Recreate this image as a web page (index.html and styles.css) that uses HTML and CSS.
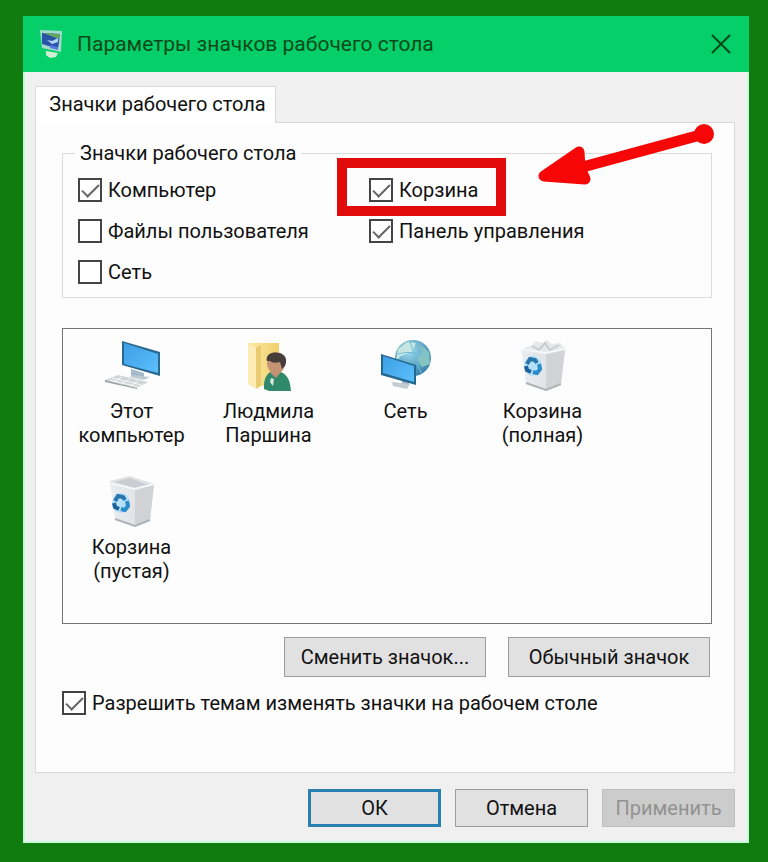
FILE: index.html
```html
<!DOCTYPE html>
<html lang="ru">

<head>
  <meta charset="utf-8">
  <meta name="viewport" content="width=device-width, initial-scale=1">
  <title>Параметры значков рабочего стола</title>
  <link rel="stylesheet" href="styles.css">
</head>

<body>
  <!-- shared icon parts -->
  <svg class="defs" width="0" height="0" aria-hidden="true">
    <defs>
      <linearGradient id="screen" x1="0" y1="0" x2="1" y2="1">
        <stop offset="0" stop-color="#3d9ee6"></stop>
        <stop offset="1" stop-color="#5cc0fa"></stop>
      </linearGradient>
      <linearGradient id="folder" x1="0" y1="0" x2="1" y2="0">
        <stop offset="0" stop-color="#fbe9a4"></stop>
        <stop offset="1" stop-color="#f2d06c"></stop>
      </linearGradient>
      <radialGradient id="globe" cx="0.4" cy="0.3" r="0.8">
        <stop offset="0" stop-color="#9fdcf2"></stop>
        <stop offset="1" stop-color="#2a789f"></stop>
      </radialGradient>
      <linearGradient id="bin" x1="0" y1="0" x2="1" y2="0">
        <stop offset="0" stop-color="#e9edf2"></stop>
        <stop offset="1" stop-color="#dbdcdf"></stop>
      </linearGradient>
      <symbol id="recycle" viewBox="0 0 18 20">
        <ellipse cx="9" cy="10" rx="9" ry="10" fill="#b5e0f8"></ellipse>
        <g fill="none" stroke-width="4">
          <path d="M3 8l3-5 5 1 2 3" stroke="#2875ab"></path>
          <path d="M15 8l1 5-3 4-4-1" stroke="#2a8cc9"></path>
          <path d="M7 16l-4-2-1-4" stroke="#1e639c"></path>
        </g>
      </symbol>
    </defs>
  </svg>

  <main class="window">
    <header class="titlebar">
      <svg class="app-icon" viewBox="0 0 26 30" aria-hidden="true">
        <path d="M2 1l22 1-1 21-19-4z" fill="#a5d9cf"></path>
        <path d="M4 4l18 1-2 15-16-5z" fill="#2854a8"></path>
        <path d="M5 4l17 1-1 5-8-3z" fill="#62a85e"></path>
        <path d="M9 11l5 1 6-3v4l-6 2z" fill="#b4d5f2"></path>
        <path d="M12 16l8 2v3l-8-2z" fill="#5379df"></path>
        <path d="M8 22l12 2-2 4-6 1-4-3z" fill="#d4efd5"></path>
      </svg>
      <h1>Параметры значков рабочего стола</h1>
      <button class="close" type="button" aria-label="Закрыть">
        <svg viewBox="0 0 20 20" aria-hidden="true">
          <path d="M1 1l18 18M19 1l-18 18" fill="none" stroke="#064a19" stroke-width="2"></path>
        </svg>
      </button>
    </header>

    <form class="content">
      <div class="tabs">
        <button class="tab" type="button">Значки рабочего стола</button>
      </div>

      <section class="panel">
        <fieldset>
          <legend>Значки рабочего стола</legend>
          <div class="options">
            <label class="check"><input type="checkbox" checked>Компьютер</label>
            <label class="check marked"><input type="checkbox" checked>Корзина</label>
            <label class="check"><input type="checkbox">Файлы пользователя</label>
            <label class="check"><input type="checkbox" checked>Панель управления</label>
            <label class="check"><input type="checkbox">Сеть</label>
          </div>
          <svg class="arrow" viewBox="0 0 180 64" aria-hidden="true">
            <g fill="#f60606" stroke="#f60606" stroke-linejoin="round">
              <path d="M167 12L42 46" stroke-width="11"></path>
              <circle cx="167" cy="12" r="10" stroke="none"></circle>
              <path d="M7 54L42 30 43 46 48 57z" stroke-width="11"></path>
            </g>
          </svg>
        </fieldset>

        <ul class="icons">
          <li>
            <svg viewBox="0 0 56 52" aria-hidden="true">
              <path d="M27 30l13 4v6l-13-3z" fill="#a5b9c8"></path>
              <path d="M28 36l18 2-6 3-14-3z" fill="#bccbd4"></path>
              <path d="M18 2l38 11v24L18 26z" fill="#296991"></path>
              <path d="M20 4l34 11v19L20 25z" fill="url(#screen)"></path>
              <path d="M14 36l30 7-11 6L1 41z" fill="#cfd5d8"></path>
              <path d="M1 41l32 8v1L1 43z" fill="#98a2a7"></path>
              <path d="M8 39l30 7M5 41l30 7M18 38l-9 5M26 40l-9 5M34 42l-8 5" fill="none" stroke="#f5f7f7"></path>
            </svg>
            <span>Этот компьютер</span>
          </li>
          <li>
            <svg viewBox="0 0 56 52" aria-hidden="true">
              <path d="M7 4h31v43H16L7 45z" fill="url(#folder)"></path>
              <path d="M7 4l8 5v41l-8-5z" fill="#fcebb2"></path>
              <path d="M15 9l5-3v41l-5 3z" fill="#eacb72"></path>
              <path d="M23 45c1-9 5-13 12-13 9 1 14 6 15 20-10 3-21 1-27-2z" fill="#31896b"></path>
              <path d="M30 35l5 4 5-6-1-6-9 2z" fill="#bd8e70"></path>
              <path d="M30 39l3 1-1 7-3-4z" fill="#dce8de"></path>
              <ellipse cx="35" cy="24" rx="9" ry="11" fill="#c39475"></ellipse>
              <path d="M26 22c-2-7 6-10 12-8 6 1 9 6 6 13l-3 3-2-7q-7 2-10-1z" fill="#473d3b"></path>
            </svg>
            <span>Людмила Паршина</span>
          </li>
          <li>
            <svg viewBox="0 0 56 52" aria-hidden="true">
              <circle cx="35" cy="19" r="18" fill="url(#globe)"></circle>
              <path d="M20 10l9-7 9 1-4 9-11 4-5 5z" fill="#c5e7df"></path>
              <path d="M41 5l10 8 1 12-8 3-5-8 5-7z" fill="#85c3c3"></path>
              <path d="M32 3l5 14 6 17M20 15q12-4 32 2" fill="none" stroke="#71bcd8"></path>
              <path d="M24 38l7 2v7l-7-2z" fill="#a4b5c4"></path>
              <path d="M14 43l18 2-3 5-14-3z" fill="#c1ccd3"></path>
              <path d="M3 15l35 11v20L3 36z" fill="#24688f"></path>
              <path d="M5 17l31 10v16L5 34z" fill="url(#screen)"></path>
            </svg>
            <span>Сеть</span>
          </li>
          <li>
            <svg viewBox="0 0 56 52" aria-hidden="true">
              <path d="M9 9l8-3 4-4 6 2 5-3 5 4 8-1 6 7-14 7-29-6z" fill="#e5e9e9"></path>
              <path d="M17 7l7 4 6-7 5 7 9-5" fill="none" stroke="#c5cccd" stroke-width="2"></path>
              <path d="M6 10l25 4 19-4-4 35-15 6-20-7z" fill="url(#bin)"></path>
              <path d="M31 14l19-4-4 35-15 6z" fill="#d1d3d6"></path>
              <path d="M6 10l25 4 19-4" fill="none" stroke="#f5f6f7" stroke-width="2"></path>
              <path d="M11 44l20 7 15-6" fill="none" stroke="#afb4b9" stroke-width="2"></path>
              <use href="#recycle" x="9" y="17" width="18" height="20"></use>
            </svg>
            <span>Корзина (полная)</span>
          </li>
          <li>
            <svg viewBox="0 0 56 52" aria-hidden="true">
              <path d="M6 6l20-5 24 8-17 6-27-5z" fill="#dfe1e3"></path>
              <path d="M10 7l16-4 18 7-14 3z" fill="#c9ced2"></path>
              <path d="M6 8l25 6 19-5-4 36-15 6-20-7z" fill="url(#bin)"></path>
              <path d="M31 14l19-5-4 36-15 6z" fill="#d0d2d5"></path>
              <path d="M6 8l25 6 19-5" fill="none" stroke="#f5f6f7" stroke-width="2"></path>
              <path d="M11 44l20 7 15-6" fill="none" stroke="#afb4b9" stroke-width="2"></path>
              <use href="#recycle" x="8" y="18" width="18" height="20"></use>
            </svg>
            <span>Корзина (пустая)</span>
          </li>
        </ul>

        <div class="icon-buttons">
          <button class="btn" type="button">Сменить значок...</button>
          <button class="btn" type="button">Обычный значок</button>
        </div>

        <label class="check"><input type="checkbox" checked>Разрешить темам изменять значки на рабочем столе</label>
      </section>

      <div class="actions">
        <button class="btn default" type="button">ОК</button>
        <button class="btn" type="button">Отмена</button>
        <button class="btn" type="button" disabled>Применить</button>
      </div>
    </form>
  </main>
</body>

</html>
```

FILE: styles.css
```css
* {
  box-sizing: border-box;
}

body {
  margin: 0;
  padding: 16px 19px 19px 23px;
  min-height: 100vh;
  display: flex;
  background-color: #107c10;
  color: #111;
  font-family: Roboto, "Liberation Sans", Arial, sans-serif;
  font-size: 20px;
  line-height: 24px;
}

button {
  font: inherit;
  color: inherit;
}

.defs {
  position: absolute;
}

.window {
  flex: 1;
  min-width: 0;
  display: flex;
  flex-direction: column;
}

.titlebar {
  display: flex;
  align-items: center;
  height: 56px;
  padding: 0 18px 0 15px;
  background-color: #05cf68;
  color: #064a19;
}

.app-icon {
  width: 26px;
  height: 30px;
}

h1 {
  flex: 1;
  margin: 0 0 0 13px;
  font-size: 21px;
  font-weight: normal;
}

.close {
  width: 20px;
  height: 20px;
  padding: 0;
  border: 0;
  background: none;
}

.close svg {
  display: block;
}

.content {
  flex: 1;
  display: flex;
  flex-direction: column;
  padding: 14px 12px 14px 10px;
  border: 2px solid #c4fbd9;
  border-top: 0;
  background-color: #f0f0f0;
}

.tabs {
  display: flex;
}

.tab {
  position: relative;
  width: 241px;
  height: 37px;
  margin-bottom: -1px;
  padding: 0 0 2px 4px;
  border: 1px solid #d9d9d9;
  border-bottom: 0;
  background-color: #fff;
}

.panel {
  flex: 1;
  padding: 18px 22px 20px 26px;
  border: 1px solid #d9d9d9;
  background-color: #fdfdfd;
}

fieldset {
  position: relative;
  height: 157px;
  margin: 0;
  padding: 13px 15px;
  border: 1px solid #dcdcdc;
}

legend {
  padding: 0 5px;
  margin-left: -3px;
}

.options {
  display: grid;
  grid-template-columns: 291px 1fr;
  row-gap: 17px;
}

.check {
  position: relative;
  display: flex;
  align-items: center;
  gap: 6px;
  justify-self: start;
}

.check input {
  appearance: none;
  flex: none;
  width: 24px;
  height: 24px;
  margin: 0;
  border: 2px solid #444;
  background-color: #fff;
}

.check input:checked::before {
  content: "";
  display: block;
  width: 15px;
  height: 7px;
  margin: 4px 2px;
  border-left: 2px solid #666;
  border-bottom: 2px solid #666;
  transform: rotate(-45deg);
}

/* red frame round the recycle bin option */
.marked::after {
  content: "";
  position: absolute;
  top: -20px;
  right: -28px;
  bottom: -14px;
  left: -32px;
  border: 10px solid #e20b0b;
}

.arrow {
  position: absolute;
  top: -43px;
  right: -6px;
  width: 180px;
  height: 64px;
}

.icons {
  display: grid;
  grid-template-columns: repeat(auto-fill, 137px);
  grid-auto-rows: 136px;
  align-content: start;
  height: 296px;
  margin: 30px 0 13px;
  padding: 10px 0;
  border: 1px solid #757575;
  list-style: none;
  text-align: center;
}

.icons li {
  display: flex;
  flex-direction: column;
  align-items: center;
}

.icons svg {
  width: 56px;
  height: 52px;
  margin-bottom: 8px;
}

.icons span {
  width: 110px;
}

.icon-buttons {
  display: flex;
  justify-content: flex-end;
  gap: 22px;
  margin: 0 2px 14px 0;
}

.btn {
  width: 133px;
  height: 38px;
  padding: 0;
  border: 1px solid #9d9d9d;
  background-color: #e1e1e1;
}

.icon-buttons .btn {
  width: 202px;
  height: 40px;
}

.btn.default {
  border: 3px solid #277fb2;
}

.btn:disabled {
  border-color: #bfbfbf;
  background-color: #ccc;
  color: #929292;
}

.actions {
  display: flex;
  justify-content: flex-end;
  gap: 14px;
  margin-top: 16px;
}
```
